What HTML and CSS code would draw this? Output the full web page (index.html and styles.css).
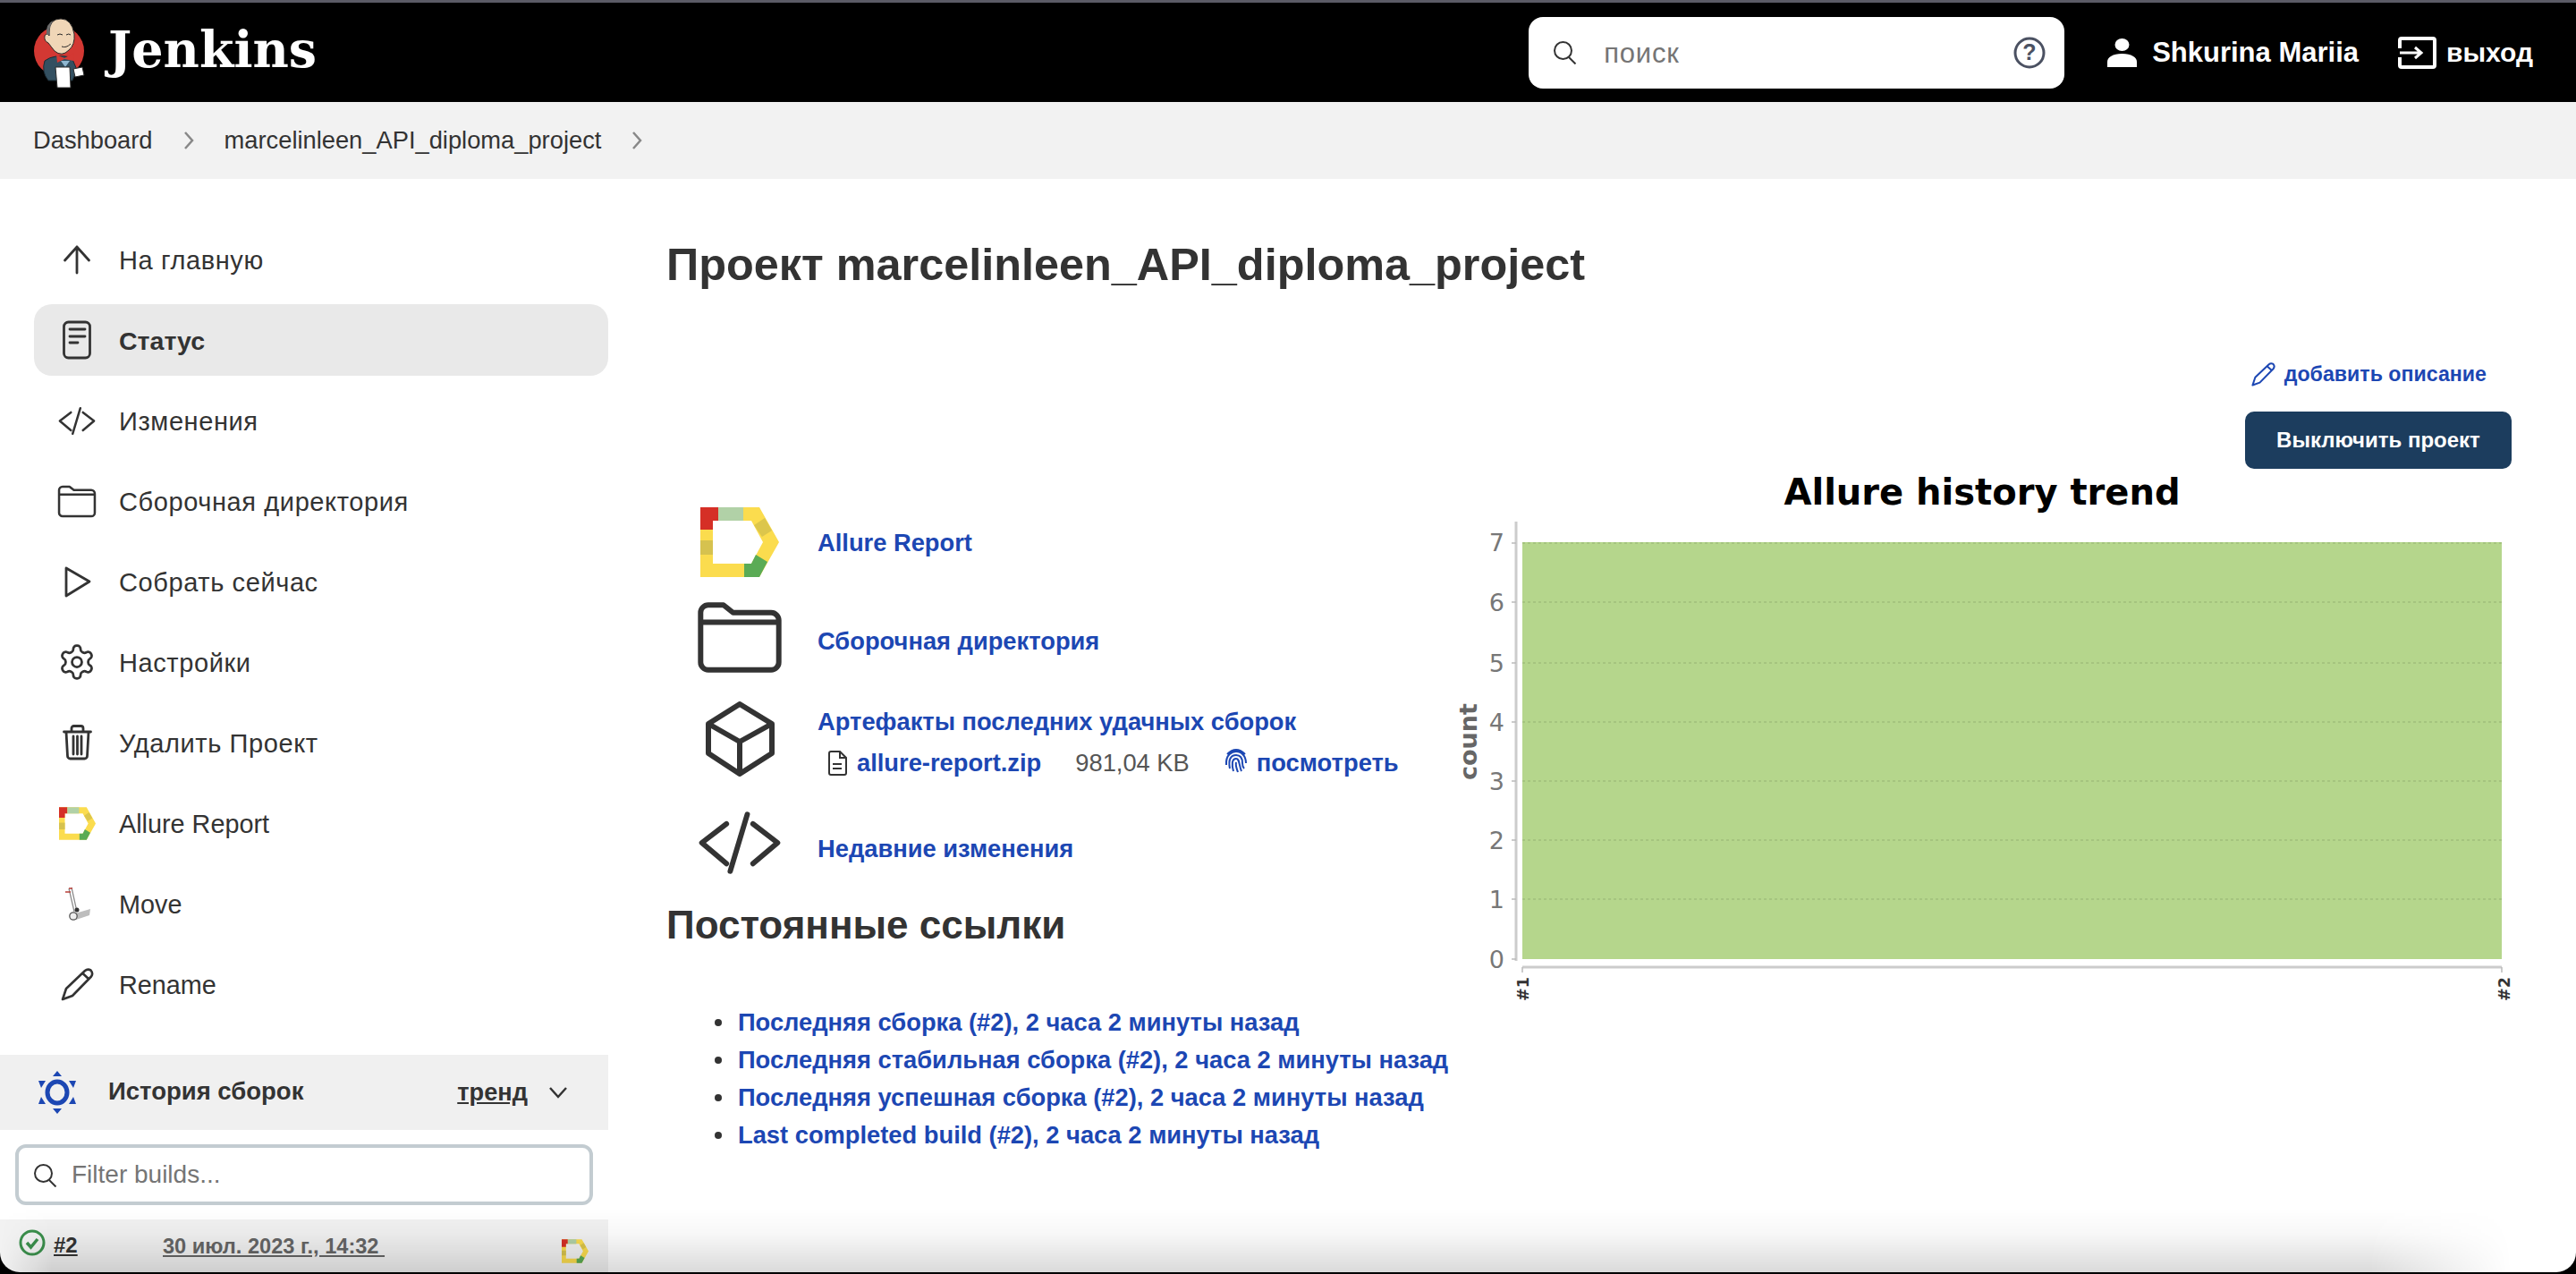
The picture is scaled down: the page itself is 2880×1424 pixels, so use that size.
FILE: index.html
```html
<!DOCTYPE html>
<html lang="ru">
<head>
<meta charset="utf-8">
<title>marcelinleen_API_diploma_project [Jenkins]</title>
<link rel="stylesheet" href="styles.css">
</head>
<body>
<svg class="defs" width="0" height="0" aria-hidden="true">
  <symbol id="i-allure" viewBox="0 0 88 78">
    <path fill="#fbdc4e" fill-rule="evenodd" d="M0 0H66L88 39 66 78H0ZM14 15V63H57L70 39 57 15Z"/>
    <path fill="#d52f26" d="M0 0H20V15H14V25H0Z"/>
    <path fill="#b1d1a7" d="M20 0H48V15H20Z"/>
    <path fill="#d6c24f" d="M0 37H14V53H0Z"/>
    <path fill="#dcc64c" d="M60 20 72 12 80 26 69 33Z"/>
    <path fill="#5aab55" d="M49 63H57L62 53 75 61 66 78H49Z"/>
  </symbol>
  <symbol id="i-folder" viewBox="0 0 45 38">
    <path fill="none" stroke="currentColor" stroke-linejoin="round" d="M2 6a4 4 0 0 1 4-4h8l5 4h20a4 4 0 0 1 4 4v22a4 4 0 0 1-4 4H6a4 4 0 0 1-4-4zM2 11h41"/>
  </symbol>
  <symbol id="i-code" viewBox="0 0 46 34">
    <path fill="none" stroke="currentColor" stroke-linecap="round" stroke-linejoin="round" d="M16 7 3 17 16 28M30 7 43 17 30 28M27 2 18 32"/>
  </symbol>
  <symbol id="i-pencil" viewBox="0 0 37 37">
    <path fill="none" stroke="currentColor" stroke-linejoin="round" d="M2 35 6 23 27 3Q30 .5 33.500 2.500 36.500 6 34 9.500L13 31ZM24.500 6 32 13"/>
  </symbol>
  <symbol id="i-search" viewBox="0 0 27 27">
    <circle cx="11.500" cy="11.500" r="9.500" fill="none" stroke="currentColor" stroke-width="2"/>
    <path d="M18 19 25.500 26.500" stroke="currentColor" stroke-width="2"/>
  </symbol>
  <symbol id="i-chevron" viewBox="0 0 12 22">
    <path d="M2 2 10 11 2 20" fill="none" stroke="currentColor" stroke-width="2.500"/>
  </symbol>
</svg>

<div class="page">
  <header class="topbar">
    <a class="brand">
      <svg class="butler" width="60" height="82" viewBox="36 16 60 82" aria-hidden="true">
        <circle cx="66" cy="55" r="28" fill="#d33833"/>
        <path fill="#335061" stroke="#1b2a33" d="M50 66Q60 58 80 62L86 76 81 88H54Q46 78 50 66Z"/>
        <path fill="#f0d6b7" stroke="#2a2a2a" d="M55 34Q55 19 68 19 80 19 83 36 84 48 77 54 69 62 61 55 57 50 54 46 49 44 50 38 52 34 55 38Z"/>
        <path fill="#6b6b6b" d="M52 36Q51 25 59 21 54 30 56 38Z"/>
        <path fill="none" stroke="#2a2a2a" d="M64 37Q67 35 70 37M74 37Q77 35 79 37M69 50Q74 52 79 47"/>
        <path fill="#d33833" d="M63 59 72 63 83 57 82 66 72 64 64 68Z"/>
        <path fill="#8fb7d0" d="M68 66H78L73 73Z"/>
        <path fill="#fff" stroke="#2a2a2a" d="M62 73H78L79 96H64Z"/>
        <path fill="#fff" stroke="#2a2a2a" d="M82 75 92 73 94 82 84 84Z"/>
      </svg>
      <span class="brand-name">Jenkins</span>
    </a>
    <div class="search">
      <svg class="ic-search" width="27" height="27"><use href="#i-search"/></svg>
      <span class="search-ph">поиск</span>
      <svg class="help" width="36" height="36" viewBox="0 0 36 36" aria-hidden="true">
        <circle cx="18" cy="18" r="16" fill="none" stroke="#4b5162" stroke-width="3"/>
        <text class="help-q" x="18" y="26" text-anchor="middle">?</text>
      </svg>
    </div>
    <a class="user">
      <svg width="33" height="32" viewBox="0 0 33 32" aria-hidden="true"><ellipse cx="16.500" cy="7" rx="8" ry="7" fill="#fff"/><path fill="#fff" d="M0 32V26C0 21 6 17 16.500 17S33 21 33 26V32Z"/></svg>
      <span>Shkurina Mariia</span>
    </a>
    <a class="logout">
      <svg width="43" height="36" viewBox="0 0 43 36" aria-hidden="true"><path fill="none" stroke="#fff" stroke-width="4" d="M2 13V4a2 2 0 0 1 2-2h35a2 2 0 0 1 2 2v28a2 2 0 0 1-2 2H4a2 2 0 0 1-2-2v-9"/><path fill="none" stroke="#fff" stroke-width="3" d="M2 18H25M19 12l7 6-7 6"/></svg>
      <span>выход</span>
    </a>
  </header>

  <nav class="crumbs">
    <a>Dashboard</a>
    <svg class="crumb-sep" width="12" height="22"><use href="#i-chevron"/></svg>
    <a>marcelinleen_API_diploma_project</a>
    <svg class="crumb-sep" width="12" height="22"><use href="#i-chevron"/></svg>
  </nav>

  <div class="content">
    <aside class="side">
      <ul class="tasks">
        <li class="task"><span class="task-ic"><svg width="44" height="44" viewBox="0 0 44 44"><path class="st" d="M22 8V37M8.500 23 22 8 35.500 23"/></svg></span><span class="task-lb">На главную</span></li>
        <li class="task task-on"><span class="task-ic"><svg width="44" height="44" viewBox="0 0 44 44"><rect class="st" x="7.500" y="2" width="29" height="40" rx="5"/><path class="st" d="M14 10H31M14 18H31M14 25H23"/></svg></span><span class="task-lb">Статус</span></li>
        <li class="task"><span class="task-ic"><svg class="st-2" width="44" height="33"><use href="#i-code"/></svg></span><span class="task-lb">Изменения</span></li>
        <li class="task"><span class="task-ic"><svg class="st-2" width="44" height="37"><use href="#i-folder"/></svg></span><span class="task-lb">Сборочная директория</span></li>
        <li class="task"><span class="task-ic"><svg width="44" height="44" viewBox="0 0 44 44"><path class="st" d="M10 7 36 22 10 38Z"/></svg></span><span class="task-lb">Собрать сейчас</span></li>
        <li class="task"><span class="task-ic"><svg width="44" height="44" viewBox="0 0 24 24"><path class="st-g" d="M12.220 2h-.44a2 2 0 0 0-2 2v.18a2 2 0 0 1-1 1.730l-.43.25a2 2 0 0 1-2 0l-.15-.08a2 2 0 0 0-2.730.73l-.22.38a2 2 0 0 0 .73 2.730l.15.1a2 2 0 0 1 1 1.720v.51a2 2 0 0 1-1 1.740l-.15.09a2 2 0 0 0-.73 2.730l.22.38a2 2 0 0 0 2.730.73l.15-.08a2 2 0 0 1 2 0l.43.25a2 2 0 0 1 1 1.730V20a2 2 0 0 0 2 2h.44a2 2 0 0 0 2-2v-.18a2 2 0 0 1 1-1.730l.43-.25a2 2 0 0 1 2 0l.15.08a2 2 0 0 0 2.730-.73l.22-.39a2 2 0 0 0-.73-2.730l-.15-.08a2 2 0 0 1-1-1.740v-.5a2 2 0 0 1 1-1.740l.15-.09a2 2 0 0 0 .73-2.730l-.22-.38a2 2 0 0 0-2.730-.73l-.15.08a2 2 0 0 1-2 0l-.43-.25a2 2 0 0 1-1-1.730V4a2 2 0 0 0-2-2z"/><circle class="st-g" cx="12" cy="12" r="3"/></svg></span><span class="task-lb">Настройки</span></li>
        <li class="task"><span class="task-ic"><svg width="33" height="40" viewBox="0 0 33 40"><path class="st" d="M1.500 8H31.500M10 8V4A2.500 2.500 0 0 1 12.500 1.500H20.500A2.500 2.500 0 0 1 23 4V8M4 8 5.500 35A3 3 0 0 0 8.500 38H24.500A3 3 0 0 0 27.500 35L29 8M12 13V33M16.500 13V33M21 13V33"/></svg></span><span class="task-lb">Удалить Проект</span></li>
        <li class="task"><span class="task-ic"><svg width="41" height="37"><use href="#i-allure"/></svg></span><span class="task-lb task-la">Allure Report</span></li>
        <li class="task"><span class="task-ic"><svg width="32" height="38" viewBox="0 0 32 38"><path d="M7 2 13 28M10 1 16 28" stroke="#8d8d8d" stroke-width="1.300"/><path d="M3 6H9M7 2H11" stroke="#b9403a" stroke-width="1.500"/><path fill="#bdbdbd" d="M14 30 31 25 30 32 15 37Z"/><circle cx="16" cy="26" r="2.500" fill="#333"/><circle cx="12" cy="33" r="4.200" fill="#eee" stroke="#555" stroke-width="1.300"/></svg></span><span class="task-lb task-la">Move</span></li>
        <li class="task"><span class="task-ic"><svg class="st-2" width="37" height="37"><use href="#i-pencil"/></svg></span><span class="task-lb task-la">Rename</span></li>
      </ul>

      <div class="hist-head">
        <svg class="hist-sun" width="42" height="48" viewBox="0 0 42 48" aria-hidden="true">
          <ellipse cx="21" cy="24" rx="11" ry="12" fill="none" stroke="#1c47b3" stroke-width="5"/>
          <path fill="#1c47b3" d="M21 0 26 6H16ZM21 48 26 42H16ZM0 11H8L3 19ZM42 11H34L39 19ZM0 37H8L3 29ZM42 37H34L39 29Z"/>
        </svg>
        <span class="hist-title">История сборок</span>
        <a class="hist-trend">тренд</a>
        <svg width="22" height="14" viewBox="0 0 22 14" aria-hidden="true"><path d="M2 2 11 12 20 2" fill="none" stroke="#333" stroke-width="2.500"/></svg>
      </div>
      <div class="filter-wrap">
        <div class="filter">
          <svg width="27" height="27"><use href="#i-search"/></svg>
          <span class="filter-ph">Filter builds...</span>
        </div>
      </div>
      <div class="build">
        <svg class="build-ok" width="30" height="30" viewBox="0 0 30 30" aria-hidden="true"><circle cx="15" cy="15" r="13" fill="none" stroke="#3b8f4c" stroke-width="3"/><path d="M9 15 13.500 20 21 11" fill="none" stroke="#3b8f4c" stroke-width="3.500"/></svg>
        <a class="build-no">#2</a>
        <a class="build-date">30 июл. 2023 г., 14:32&nbsp;</a>
        <svg class="build-allure" width="30" height="27"><use href="#i-allure"/></svg>
      </div>
    </aside>

    <main class="main">
      <h1 class="title">Проект marcelinleen_API_diploma_project</h1>
      <div class="desc-row">
        <svg class="desc-ic" width="27" height="27"><use href="#i-pencil"/></svg>
        <a class="desc-link">добавить описание</a>
      </div>
      <div class="btn-row"><button class="btn" type="button">Выключить проект</button></div>

      <div class="columns">
        <div class="left">
          <div class="row">
            <span class="row-ic"><svg width="88" height="78"><use href="#i-allure"/></svg></span>
            <a class="lnk lnk-a">Allure Report</a>
          </div>
          <div class="row row-2">
            <span class="row-ic"><svg class="st-5 folder-big" width="96" height="81"><use href="#i-folder"/></svg></span>
            <a class="lnk lnk-dir">Сборочная директория</a>
          </div>
          <div class="row row-3">
            <span class="row-ic">
              <svg width="77" height="84" viewBox="0 0 77 84"><path class="st-b" d="M38 3 74 25V58L38 81 3 58V25ZM3 25 38 45 74 25M38 45V81"/></svg>
            </span>
            <div class="art">
              <a class="lnk">Артефакты последних удачных сборок</a>
              <div class="art-file">
                <svg width="22" height="28" viewBox="0 0 22 28" aria-hidden="true"><path d="M2 3A2 2 0 0 1 4 1H14L21 8V25A2 2 0 0 1 19 27H4A2 2 0 0 1 2 25ZM14 1V8H21M6 15H16M6 20H16" fill="none" stroke="#333" stroke-width="2"/></svg>
                <a class="lnk file-name">allure-report.zip</a>
                <span class="file-size">981,04 KB</span>
                <svg class="finger" width="26" height="30" viewBox="0 0 26 30" aria-hidden="true"><path d="M3 8Q13-2 23 8M2 20C1 8 9 5 13 5 19 5 24 10 24 18M6 24C4 14 7 9 13 9 18 9 20 13 20 18 20 21 21 23 22 24M10 27C8 20 8 13 13 13 17 13 16 20 19 27M13 17C12 21 14 25 15 28" fill="none" stroke="#1c47b3" stroke-width="2"/></svg>
                <a class="lnk">посмотреть</a>
              </div>
            </div>
          </div>
          <div class="row row-4">
            <span class="row-ic"><svg class="st-5 code-big" width="98" height="72"><use href="#i-code"/></svg></span>
            <a class="lnk lnk-low">Недавние изменения</a>
          </div>
          <h2 class="perma">Постоянные ссылки</h2>
          <ul class="perma-list">
            <li><a class="lnk">Последняя сборка (#2), 2 часа 2 минуты назад</a></li>
            <li><a class="lnk">Последняя стабильная сборка (#2), 2 часа 2 минуты назад</a></li>
            <li><a class="lnk">Последняя успешная сборка (#2), 2 часа 2 минуты назад</a></li>
            <li><a class="lnk">Last completed build (#2), 2 часа 2 минуты назад</a></li>
          </ul>
        </div>

        <svg class="chart" width="1170" height="620" viewBox="1640 524 1170 620" role="img" aria-label="Allure history trend">
          <text class="ch-title" x="2216" y="564" text-anchor="middle">Allure history trend</text>
          <rect x="1702" y="606" width="1095" height="466" fill="#b5d68c"/>
          <path class="ch-grid" d="M1702 607H2797M1702 673H2797M1702 741H2797M1702 807H2797M1702 873H2797M1702 939H2797M1702 1005H2797"/>
          <path class="ch-axis" d="M1695 583V1074M2797 1081H1702"/>
          <path class="ch-tick" d="M1690 607H1695M1690 673H1695M1690 741H1695M1690 807H1695M1690 873H1695M1690 939H1695M1690 1005H1695M1690 1072H1695M1702 1081V1087M2797 1081V1087"/>
          <text class="ch-y" x="1682" y="616" text-anchor="end">7</text>
          <text class="ch-y" x="1682" y="683" text-anchor="end">6</text>
          <text class="ch-y" x="1682" y="751" text-anchor="end">5</text>
          <text class="ch-y" x="1682" y="817" text-anchor="end">4</text>
          <text class="ch-y" x="1682" y="883" text-anchor="end">3</text>
          <text class="ch-y" x="1682" y="949" text-anchor="end">2</text>
          <text class="ch-y" x="1682" y="1015" text-anchor="end">1</text>
          <text class="ch-y" x="1682" y="1082" text-anchor="end">0</text>
          <text class="ch-count" transform="translate(1651 829) rotate(-90)" text-anchor="middle">count</text>
          <text class="ch-x" transform="translate(1709 1119) rotate(-90)">#1</text>
          <text class="ch-x" transform="translate(2806 1119) rotate(-90)">#2</text>
        </svg>
      </div>
    </main>
  </div>
</div>
<div class="shade"></div>
<div class="edge"></div>
</body>
</html>
```
FILE: styles.css
```css
* { box-sizing: border-box; }
html, body { margin: 0; height: 100%; }
body {
  position: relative;
  width: 2880px;
  height: 1424px;
  overflow: hidden;
  background: #fff;
  color: #333;
  font-family: "Liberation Sans", Arial, sans-serif;
}
a { color: inherit; text-decoration: none; }
ul { margin: 0; padding: 0; }
.defs { position: absolute; }
.page { display: flex; flex-direction: column; height: 100%; }

/* top bar */
.topbar {
  display: flex;
  align-items: center;
  flex: none;
  height: 114px;
  padding: 0 48px 0 36px;
  background: #000;
  border-top: 3px solid #5b5b66;
  color: #fff;
}
.brand { display: flex; align-items: center; gap: 25px; margin-right: auto; }
.brand-name {
  margin-top: -6px;
  font-family: "DejaVu Serif", "Liberation Serif", serif;
  font-weight: 700;
  font-size: 55.500px;
  line-height: 60px;
}
.search {
  display: flex;
  align-items: center;
  width: 599px;
  height: 80px;
  padding: 0 21px 0 27px;
  background: #fff;
  border-radius: 16px;
  color: #333;
}
.search-ph { margin-left: 30px; margin-right: auto; margin-top: 2px; font-size: 31px; letter-spacing: .8px; color: #757575; }
.help-q { font-family: "Liberation Sans", sans-serif; font-weight: 700; font-size: 25px; fill: #4b5162; }
.user {
  display: flex; align-items: center; gap: 17px;
  margin-left: 48px;
  font-weight: 700; font-size: 31px;
}
.logout {
  display: flex; align-items: center; gap: 11px;
  margin-left: 44px;
  font-weight: 700; font-size: 30px;
}

/* breadcrumb */
.crumbs {
  display: flex;
  align-items: center;
  flex: none;
  height: 86px;
  padding-left: 37px;
  background: #f2f2f2;
  font-size: 27.300px;
}
.crumb-sep { margin: 0 34px; color: #888; }

.content { display: flex; flex: 1; min-height: 0; }

/* side panel */
.side { flex: none; width: 680px; }
.tasks { list-style: none; padding: 50px 0 0 38px; }
.task {
  display: flex;
  align-items: center;
  height: 80px;
  margin-bottom: 10px;
  padding-left: 26px;
  border-radius: 20px;
}
.task-on { background: #e9e9e9; font-weight: 700; }
.task-ic { display: flex; align-items: center; justify-content: center; flex: none; width: 44px; margin-right: 25px; color: #333; }
.task-lb { margin-top: 2px; font-size: 29px; letter-spacing: .6px; }
.task-on .task-lb { letter-spacing: 0; font-size: 28.500px; }
.task-la { font-size: 28.800px; letter-spacing: 0; }
.st { fill: none; stroke: #333; stroke-width: 2.800; stroke-linejoin: round; stroke-linecap: round; }
.st-g { fill: none; stroke: #333; stroke-width: 1.500; stroke-linejoin: round; }
.st-2 { stroke-width: 2.600; }
.st-5 { stroke-width: 2.800; }
.st-b { fill: none; stroke: #333; stroke-width: 6; stroke-linejoin: round; }

.hist-head {
  display: flex;
  align-items: center;
  height: 84px;
  margin-top: 39px;
  padding-left: 43px;
  padding-right: 45px;
  background: #f0f0f0;
}
.hist-sun { flex: none; }
.hist-title { margin-left: 36px; margin-right: auto; margin-top: -3px; font-weight: 700; font-size: 27.500px; }
.hist-trend { margin-right: 23px; font-weight: 700; font-size: 27.200px; text-decoration: underline; }
.filter-wrap { padding: 16px 17px; }
.filter {
  display: flex;
  align-items: center;
  gap: 16px;
  height: 68px;
  padding-left: 16px;
  border: 4px solid #c3ccd1;
  border-radius: 12px;
  color: #333;
}
.filter-ph { font-size: 28px; color: #757575; }
.build {
  display: flex;
  align-items: flex-start;
  height: 61px;
  padding: 11px 22px 0 21px;
  background: #f2f2f2;
  font-weight: 700;
}
.build-ok { flex: none; }
.build-no { width: 122px; margin-left: 9px; margin-top: 2px; font-size: 24px; line-height: 32px; text-decoration: underline; }
.build-date { margin-top: 3px; font-size: 23.600px; line-height: 32px; color: #666; text-decoration: underline; }
.build-allure { margin-left: auto; margin-top: 11px; }

/* main column */
.main { flex: 1; min-width: 0; padding: 66px 72px 0 65px; }
.title { margin: 0; font-size: 50.400px; line-height: 60px; font-weight: 700; }
.desc-row { display: flex; justify-content: flex-end; align-items: center; gap: 10px; height: 40px; margin-top: 72px; padding-right: 28px; color: #1c47b3; }
.desc-ic { stroke-width: 2.800; }
.desc-link { font-weight: 700; font-size: 23.200px; }
.btn-row { display: flex; justify-content: flex-end; margin-top: 22px; }
.btn {
  width: 298px;
  height: 64px;
  padding: 0;
  border: 0;
  border-radius: 10px;
  background: #1c3d5e;
  color: #fff;
  font: 700 24px "Liberation Sans", sans-serif;
}
.columns { display: flex; }
.left { flex: none; width: 895px; padding-top: 43px; }
.row { display: flex; align-items: center; gap: 42px; padding-left: 37px; }
.row-ic { display: flex; justify-content: center; flex: none; width: 90px; color: #333; }
.row-2 { margin-top: 29px; }
.row-3 { margin-top: 33px; }
.row-4 { margin-top: 40px; }
.lnk { font-weight: 700; font-size: 27.300px; color: #1c47b3; }
.lnk-a { margin-top: 1px; }
.lnk-dir { margin-top: 10px; }
.lnk-low { margin-top: 14px; }
.folder-big { flex: none; margin: -2.500px -3px; }
.code-big { flex: none; margin: -3px -4px; }
.art { display: flex; flex-direction: column; margin-top: 8px; }
.art-file { display: flex; align-items: center; margin-top: 14px; padding-left: 11px; }
.file-name { margin-left: 11px; }
.file-size { margin-left: 38px; font-size: 27.300px; color: #555; }
.finger { margin-left: 39px; margin-right: 10px; margin-top: -6px; }
.perma { margin: 34px 0 0; font-size: 44px; line-height: 50px; font-weight: 700; }
.perma-list { list-style: none; margin-top: 63px; padding-left: 54px; }
.perma-list li { display: flex; align-items: center; height: 42px; }
.perma-list li::before { content: ""; flex: none; width: 8px; height: 8px; margin-right: 18px; border-radius: 50%; background: #333; }

/* chart */
.chart { flex: none; overflow: visible; }
.ch-title { font-family: "DejaVu Sans", sans-serif; font-weight: 700; font-size: 40px; fill: #000; }
.ch-grid { fill: none; stroke: #a5c47f; stroke-width: 2; stroke-dasharray: 3 3; }
.ch-axis { fill: none; stroke: #ccc; stroke-width: 3; }
.ch-tick { fill: none; stroke: #bbb; stroke-width: 1.500; }
.ch-y { font-family: "DejaVu Sans", sans-serif; font-size: 27px; fill: #777; }
.ch-count { font-family: "DejaVu Sans", sans-serif; font-weight: 700; font-size: 27px; fill: #666; }
.ch-x { font-family: "DejaVu Sans", sans-serif; font-weight: 700; font-size: 17.500px; fill: #333; }

/* window frame painted over the capture */
.shade {
  position: absolute;
  left: 0; right: 0; bottom: 0;
  height: 74px;
  background: linear-gradient(to bottom, rgba(0,0,0,0), rgba(0,0,0,.03) 40%, rgba(0,0,0,.15));
  -webkit-mask-image: linear-gradient(to right, transparent 0, #000 2%, #000 92%, transparent 97.500%);
  mask-image: linear-gradient(to right, transparent 0, #000 2%, #000 92%, transparent 97.500%);
  pointer-events: none;
}
.edge {
  position: absolute;
  left: 0; right: 0; top: 0; bottom: 2px;
  border-radius: 0 0 22px 22px;
  box-shadow: 0 0 0 40px #000;
  pointer-events: none;
}
```
